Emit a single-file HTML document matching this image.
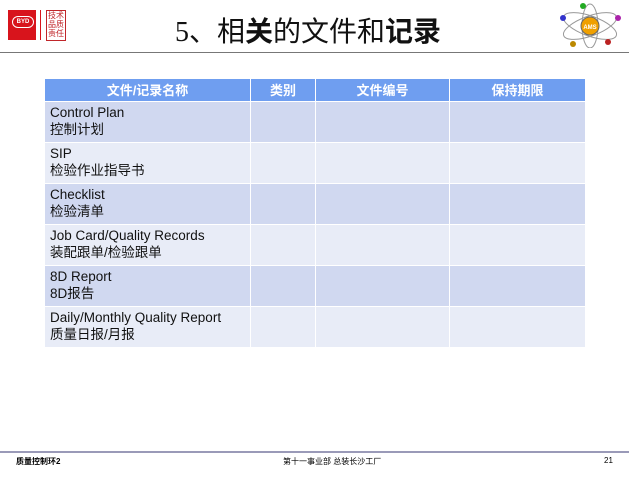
<!DOCTYPE html>
<html><head><meta charset="utf-8"><style>
body{margin:0;width:629px;height:480px;background:#fff;position:relative;overflow:hidden;font-family:"Liberation Sans","Noto Sans CJK SC",sans-serif}
.a{position:absolute}
table{position:absolute;left:44px;top:78px;border-collapse:collapse;width:541px;table-layout:fixed}
td,th{border:1px solid #fff;padding:0 0 0 5px;font-size:13.5px;color:#111;line-height:17px;vertical-align:top}
th{background:#6f9ef0;color:#fff;height:22px;font-size:13px;text-align:center;padding:0;vertical-align:middle;font-weight:bold}
tr.o td{background:#d0d8f0;height:38px;padding-top:2px}
tr.e td{background:#e8ecf7;height:38px;padding-top:2px}
</style></head><body>
<div class="a" style="left:8px;top:10px;width:28px;height:30px;background:#d8141c"></div>
<div class="a" style="left:12px;top:16px;width:20px;height:10px;border:1.5px solid #fff;border-radius:6px;color:#fff;font-size:6px;text-align:center;line-height:10px;font-weight:bold">BYD</div>
<div class="a" style="left:40px;top:10px;width:1px;height:30px;background:#d8141c"></div>
<div class="a" style="left:46px;top:10px;width:18px;height:29px;border:1px solid #c0262a;color:#c0262a;font-size:8px;line-height:9px;text-align:center">技术<br>品质<br>责任</div>
<div class="a" style="left:175px;top:10px;font-family:'Liberation Serif','Noto Sans CJK SC',serif;font-size:28px;color:#111">5、相<b>关</b>的文件和<b>记录</b></div>
<svg class="a" style="left:558px;top:2px" width="65" height="46">
<ellipse cx="32" cy="24" rx="28" ry="10" fill="none" stroke="#999" transform="rotate(20 32 24)"/>
<ellipse cx="32" cy="24" rx="28" ry="10" fill="none" stroke="#999" transform="rotate(-20 32 24)"/>
<ellipse cx="32" cy="24" rx="8" ry="22" fill="none" stroke="#999"/>
<circle cx="32" cy="24" r="9" fill="#f0a000" stroke="#666"/>
<text x="32" y="27" font-size="6" text-anchor="middle" fill="#fff" font-weight="bold">AMS</text>
<circle cx="25" cy="4" r="3" fill="#2a2"/><circle cx="5" cy="16" r="3" fill="#33c"/><circle cx="60" cy="16" r="3" fill="#a2a"/><circle cx="15" cy="42" r="3" fill="#b80"/><circle cx="50" cy="40" r="3" fill="#b22"/>
</svg>
<div class="a" style="left:0;top:52px;width:629px;height:1px;background:#777"></div>
<table>
<colgroup><col style="width:206px"><col style="width:65px"><col style="width:134px"><col style="width:136px"></colgroup>
<tr><th>文件/记录名称</th><th>类别</th><th>文件编号</th><th>保持期限</th></tr>
<tr class="o"><td>Control Plan<br>控制计划</td><td></td><td></td><td></td></tr>
<tr class="e"><td>SIP<br>检验作业指导书</td><td></td><td></td><td></td></tr>
<tr class="o"><td>Checklist<br>检验清单</td><td></td><td></td><td></td></tr>
<tr class="e"><td>Job Card/Quality Records<br>装配跟单/检验跟单</td><td></td><td></td><td></td></tr>
<tr class="o"><td>8D Report<br>8D报告</td><td></td><td></td><td></td></tr>
<tr class="e"><td>Daily/Monthly Quality Report<br>质量日报/月报</td><td></td><td></td><td></td></tr>
</table>
<div class="a" style="left:0;top:451px;width:629px;height:2px;background:#9a9ab8"></div>
<div class="a" style="left:16px;top:456px;font-size:8px;font-weight:bold">质量控制环2</div>
<div class="a" style="left:283px;top:456px;font-size:8px">第十一事业部 总装长沙工厂</div>
<div class="a" style="left:604px;top:456px;font-size:8px">21</div>
</body></html>
